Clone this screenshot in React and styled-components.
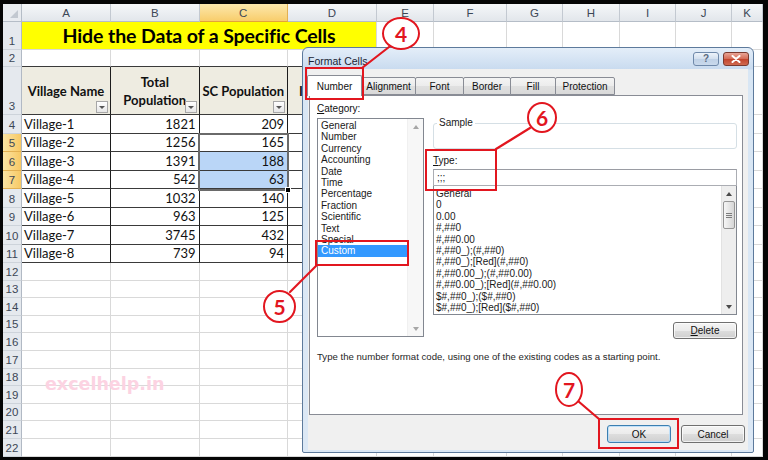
import React from 'react';
import styled, { createGlobalStyle } from 'styled-components';

const RED = '#e2161f';
const SHEET_FONT = "Lato, 'Liberation Sans', Arial, sans-serif";
const UI_FONT = "'Liberation Sans', Arial, sans-serif";

const GlobalStyle = createGlobalStyle`
  html, body { margin: 0; padding: 0; background: #000; }
  *, *::before, *::after { box-sizing: border-box; }
`;

const Frame = styled.div`
  position: relative;
  width: 768px;
  height: 460px;
  padding: 4px 5px 3px 3px;
  background: #050505;
  overflow: hidden;
`;

const Sheet = styled.div`
  display: grid;
  grid-template-columns: 19px 89px 88.5px 88.5px 89px 57px 73px 56px 57px 56px 56px 31px;
  grid-template-rows: 18px 28px 17px 48px repeat(8, 18.5px) repeat(11, 17.6px);
  height: 453px;
  background: #fff;
  font-family: ${SHEET_FONT};
  font-size: 13px;
  color: #111;
`;

const Corner = styled.div`
  position: relative;
  background: #e9ecf0;
  border-right: 1px solid #b5bdc7;
  border-bottom: 1px solid #b5bdc7;
  &::after {
    content: '';
    position: absolute;
    right: 3px;
    bottom: 3px;
    border-left: 8px solid transparent;
    border-bottom: 8px solid #c3c9d1;
  }
`;

const ColHead = styled.div`
  display: flex;
  align-items: center;
  justify-content: center;
  font-family: ${UI_FONT};
  font-size: 11.5px;
  color: #3c4756;
  background: ${(p) => (p.$active ? 'linear-gradient(#fce8ad, #f8cd6b)' : 'linear-gradient(#f5f7f9, #e2e6eb)')};
  border-right: 1px solid ${(p) => (p.$active ? '#e2b052' : '#c3c9d1')};
  border-bottom: 1px solid ${(p) => (p.$active ? '#e2a33a' : '#b5bdc7')};
`;

const RowHead = styled.div`
  display: flex;
  align-items: flex-end;
  justify-content: center;
  padding-bottom: 2px;
  font-family: ${UI_FONT};
  font-size: 11.5px;
  color: #3c4756;
  background: ${(p) => (p.$active ? 'linear-gradient(90deg, #fbe4a4, #f7c964)' : '#e5e9ee')};
  border-right: 1px solid #b1b9c4;
  border-bottom: 1px solid ${(p) => (p.$active ? '#e2b052' : '#cdd3da')};
`;

const Cell = styled.div`
  position: relative;
  display: flex;
  align-items: center;
  justify-content: ${(p) => (p.$align === 'right' ? 'flex-end' : p.$align === 'center' ? 'center' : 'flex-start')};
  padding: 0 3px 0 2px;
  white-space: nowrap;
  overflow: hidden;
  background: ${(p) => p.$bg || '#fff'};
  border-right: 1px solid ${(p) => (p.$tr ? '#1c1c1c' : '#d9d9d9')};
  border-bottom: 1px solid ${(p) => (p.$tb ? '#3a3a3a' : '#d9d9d9')};
`;

const TitleCell = styled.div`
  grid-column: span 4;
  display: flex;
  align-items: center;
  justify-content: center;
  background: #ffff00;
  font-weight: 700;
  font-size: 19.5px;
  letter-spacing: -0.1px;
  color: #000;
  border-right: 1px solid #d9d9d9;
  border-bottom: 1px solid #d9d9d9;
`;

const HeadCell = styled.div`
  position: relative;
  display: flex;
  align-items: center;
  justify-content: ${(p) => (p.$start ? 'flex-start' : 'center')};
  padding: ${(p) => (p.$start ? '0 0 0 11px' : '0 2px')};
  text-align: center;
  line-height: 18px;
  font-weight: 700;
  background: #eeece1;
  overflow: hidden;
  border-right: 1px solid #1c1c1c;
  border-bottom: 1px solid #3a3a3a;
`;

const Clip = styled.span`
  display: inline-block;
  width: 3px;
  overflow: hidden;
  white-space: nowrap;
`;

const FilterBtn = styled.span`
  position: absolute;
  right: 2px;
  bottom: 1px;
  width: 12px;
  height: 12px;
  border: 1px solid #a7a7a7;
  background: linear-gradient(#ffffff, #e6e6e6);
  display: flex;
  align-items: center;
  justify-content: center;
  &::after {
    content: '';
    border-left: 3px solid transparent;
    border-right: 3px solid transparent;
    border-top: 3px solid #555;
    margin-top: 1px;
  }
`;

const Selection = styled.div`
  position: absolute;
  left: 198px;
  top: 133px;
  width: 91px;
  height: 58px;
  border: 2px solid #6a6a6a;
  z-index: 2;
`;

const FillHandle = styled.span`
  position: absolute;
  right: -4px;
  bottom: -4px;
  width: 6px;
  height: 6px;
  background: #000;
  border: 1px solid #fff;
`;

const Watermark = styled.div`
  position: absolute;
  left: 45px;
  top: 374px;
  font-family: 'DejaVu Sans', Verdana, sans-serif;
  font-weight: 700;
  font-size: 17.5px;
  color: #fcd3e2;
  z-index: 2;
`;

/* ---------- Dialog ---------- */

const Dialog = styled.div`
  position: absolute;
  left: 302px;
  top: 47px;
  width: 452px;
  height: 406px;
  display: flex;
  flex-direction: column;
  padding: 0 5px 2px;
  border: 1px solid #5d7a9c;
  border-radius: 6px 6px 2px 2px;
  background: linear-gradient(180deg, #e4eef9 0px, #c9dbef 21px, #d8e6f4 22px, #dce8f5 100%);
  font-family: ${UI_FONT};
  font-size: 9.6px;
  color: #111;
  z-index: 3;
`;

const TitleBar = styled.div`
  flex: none;
  height: 21px;
  display: flex;
  align-items: flex-start;
  justify-content: space-between;
`;

const TitleText = styled.div`
  margin-top: 7px;
  font-size: 10.5px;
  color: #1b2535;
`;

const WinButtons = styled.div`
  display: flex;
  gap: 4px;
  margin-top: 4px;
  margin-right: -1px;
`;

const HelpBtn = styled.div`
  width: 26px;
  height: 14px;
  border: 1px solid #6f89aa;
  border-radius: 3px;
  background: linear-gradient(#edf3fa, #d2dfee 50%, #bfd1e6 51%, #c9d9ec);
  color: #5a6a7e;
  font-size: 10px;
  font-weight: 700;
  display: flex;
  align-items: center;
  justify-content: center;
  line-height: 1;
`;

const CloseBtn = styled.div`
  width: 26px;
  height: 14px;
  border: 1px solid #7a3a30;
  border-radius: 3px;
  background: linear-gradient(#e9a597, #d46a55 50%, #c2442d 51%, #d06a50);
  display: flex;
  align-items: center;
  justify-content: center;
`;

const Client = styled.div`
  flex: 1;
  display: flex;
  flex-direction: column;
  padding: 6px 5px 0 1px;
  background: #f0f0f0;
`;

const TabStrip = styled.div`
  display: flex;
  align-items: flex-end;
  height: 20px;
  margin-left: -2px;
  position: relative;
  z-index: 1;
`;

const Tab = styled.div`
  width: ${(p) => p.$w}px;
  height: ${(p) => (p.$active ? 21 : 18)}px;
  margin-bottom: ${(p) => (p.$active ? -1 : 0)}px;
  margin-left: -1px;
  position: relative;
  z-index: ${(p) => (p.$active ? 2 : 1)};
  display: flex;
  align-items: center;
  justify-content: center;
  padding-top: ${(p) => (p.$active ? 0 : 1)}px;
  border: 1px solid #898c95;
  border-bottom: ${(p) => (p.$active ? 'none' : '1px solid #898c95')};
  border-radius: 2px 2px 0 0;
  background: ${(p) => (p.$active ? '#fff' : 'linear-gradient(#f4f4f4, #ececec 50%, #e0e0e0 51%, #d9d9d9)')};
  font-size: 10px;
  color: #111;
  &:first-child { margin-left: 0; }
`;

const Panel = styled.div`
  flex: none;
  height: 320px;
  display: flex;
  flex-direction: column;
  padding: 6px 5px 0 7px;
  border: 1px solid #898c95;
  background: #fff;
`;

const TopArea = styled.div`
  display: flex;
  gap: 9px;
  height: 237px;
`;

const LeftCol = styled.div`
  width: 107px;
  display: flex;
  flex-direction: column;
`;

const RightCol = styled.div`
  width: 304px;
  display: flex;
  flex-direction: column;
`;

const FieldLabel = styled.div`
  height: ${(p) => p.$h || 14}px;
  line-height: ${(p) => p.$h || 14}px;
  margin-top: ${(p) => p.$mt || 0}px;
  font-size: 10px;
  color: #111;
`;

const ListBox = styled.div`
  display: flex;
  height: ${(p) => p.$h}px;
  margin-top: ${(p) => p.$mt}px;
  border: 1px solid #828790;
  background: #fff;
  overflow: hidden;
`;

const ListItems = styled.div`
  flex: 1;
  padding-top: ${(p) => p.$pt}px;
  overflow: hidden;
`;

const ListItem = styled.div`
  height: 11.4px;
  line-height: 11.4px;
  padding-left: ${(p) => p.$pl}px;
  font-size: 10px;
  white-space: nowrap;
  color: ${(p) => (p.$sel ? '#fff' : '#1a1a1a')};
  background: ${(p) => (p.$sel ? '#3399ff' : 'transparent')};
`;

const VScroll = styled.div`
  width: ${(p) => p.$w}px;
  flex: none;
  display: flex;
  flex-direction: column;
  background: ${(p) => (p.$disabled ? '#f7f7f7' : '#eeeeee')};
  border-left: 1px solid ${(p) => (p.$disabled ? '#f0f0f0' : '#e2e2e2')};
`;

const ScrollBtn = styled.div`
  height: 15px;
  flex: none;
  display: flex;
  align-items: center;
  justify-content: center;
`;

const Arrow = styled.span`
  width: 0;
  height: 0;
  border-left: 3.5px solid transparent;
  border-right: 3.5px solid transparent;
  border-top: ${(p) => (p.$down ? `4px solid ${p.$off ? '#a6a6a6' : '#4a4a4a'}` : 'none')};
  border-bottom: ${(p) => (p.$down ? 'none' : `4px solid ${p.$off ? '#a6a6a6' : '#4a4a4a'}`)};
`;

const Track = styled.div`
  flex: 1;
`;

const Thumb = styled.div`
  height: 28px;
  margin: 0 1px;
  border: 1px solid #969696;
  border-radius: 2px;
  background: linear-gradient(90deg, #f6f6f6, #e6e6e6 50%, #d6d6d6);
  display: flex;
  align-items: center;
  justify-content: center;
`;

const Grip = styled.span`
  width: 6px;
  height: 5px;
  border-top: 1px solid #7c7c7c;
  border-bottom: 1px solid #7c7c7c;
  position: relative;
  &::after {
    content: '';
    position: absolute;
    left: 0;
    right: 0;
    top: 1px;
    border-top: 1px solid #7c7c7c;
  }
`;

const Group = styled.fieldset`
  margin: 15px 0 0;
  padding: 0;
  height: 32px;
  border: 1px solid #d5dfe5;
  border-radius: 3px;
`;

const Legend = styled.legend`
  margin-left: 3px;
  padding: 0 2px;
  font-size: 10px;
  line-height: 12px;
  color: #1a1a1a;
`;

const TextInput = styled.div`
  height: 17px;
  margin-top: 2px;
  padding-left: 3px;
  display: flex;
  align-items: center;
  border: 1px solid #abadb3;
  border-top-color: #9a9ca3;
  font-size: 10px;
  color: #1a1a1a;
  background: #fff;
  position: relative;
  z-index: 1;
`;

const Button = styled.div`
  width: 64px;
  height: ${(p) => p.$h || 18}px;
  margin-top: ${(p) => p.$mt || 0}px;
  align-self: flex-end;
  display: flex;
  align-items: center;
  justify-content: center;
  border: 1px solid ${(p) => (p.$default ? '#3c7fb1' : '#707070')};
  border-radius: 3px;
  background: linear-gradient(#f4f4f4, #ebebeb 50%, #dddddd 51%, #d0d0d0);
  box-shadow: inset 0 0 0 1px ${(p) => (p.$default ? 'rgba(180,220,250,0.8)' : 'rgba(255,255,255,0.7)')};
  font-size: 10px;
  color: #111;
`;

const Desc = styled.div`
  margin-top: 12px;
  line-height: 12px;
  font-size: 9.6px;
  color: #1f1f1f;
  white-space: nowrap;
`;

const Footer = styled.div`
  display: flex;
  justify-content: flex-end;
  gap: 10px;
  padding-top: 10px;
  margin-right: -2px;
`;

/* ---------- Annotations ---------- */

const Connectors = styled.svg`
  position: absolute;
  left: 0;
  top: 0;
  width: 768px;
  height: 460px;
  pointer-events: none;
  z-index: 4;
`;

const Mark = styled.div`
  position: absolute;
  left: ${(p) => p.$x}px;
  top: ${(p) => p.$y}px;
  width: ${(p) => p.$w}px;
  height: ${(p) => p.$h}px;
  border: 2.5px solid ${RED};
  z-index: 5;
`;

const Callout = styled.div`
  position: absolute;
  left: ${(p) => p.$x}px;
  top: ${(p) => p.$y}px;
  width: ${(p) => p.$w}px;
  height: ${(p) => p.$h}px;
  border: 2.5px solid ${RED};
  border-radius: 50%;
  background: #fff;
  display: flex;
  align-items: center;
  justify-content: center;
  font-family: Lato, 'Liberation Sans', Arial, sans-serif;
  font-weight: 700;
  font-size: 21px;
  color: ${RED};
  z-index: 6;
`;

/* ---------- Data ---------- */

const COLS = ['A', 'B', 'C', 'D', 'E', 'F', 'G', 'H', 'I', 'J', 'K'];
const DATA = [
  ['Village-1', 1821, 209],
  ['Village-2', 1256, 165],
  ['Village-3', 1391, 188],
  ['Village-4', 542, 63],
  ['Village-5', 1032, 140],
  ['Village-6', 963, 125],
  ['Village-7', 3745, 432],
  ['Village-8', 739, 94],
];
const CATEGORIES = ['General', 'Number', 'Currency', 'Accounting', 'Date', 'Time', 'Percentage', 'Fraction', 'Scientific', 'Text', 'Special', 'Custom'];
const TYPES = [
  'General', '0', '0.00', '#,##0', '#,##0.00', '#,##0_);(#,##0)', '#,##0_);[Red](#,##0)',
  '#,##0.00_);(#,##0.00)', '#,##0.00_);[Red](#,##0.00)', '$#,##0_);($#,##0)', '$#,##0_);[Red]($#,##0)',
];
const TABS = [
  ['Number', 55, true], ['Alignment', 55], ['Font', 49], ['Border', 48], ['Fill', 46], ['Protection', 60],
];

function EmptyCells({ from = 0, row }) {
  return COLS.slice(from).map((c) => <Cell key={`${row}-${c}`} />);
}

export default function App() {
  return (
    <Frame>
      <GlobalStyle />
      <Sheet>
        <Corner />
        {COLS.map((c) => (
          <ColHead key={c} $active={c === 'C'}>{c}</ColHead>
        ))}

        <RowHead>1</RowHead>
        <TitleCell>Hide the Data of a Specific Cells</TitleCell>
        <EmptyCells from={4} row={1} />

        <RowHead>2</RowHead>
        {COLS.map((c, i) => (
          <Cell key={`2-${c}`} $tb={i < 4} $tr={i === 3} />
        ))}

        <RowHead>3</RowHead>
        <HeadCell>Village Name<FilterBtn /></HeadCell>
        <HeadCell>Total Population<FilterBtn /></HeadCell>
        <HeadCell>SC Population<FilterBtn /></HeadCell>
        <HeadCell $start><Clip>I</Clip><FilterBtn /></HeadCell>
        <EmptyCells from={4} row={3} />

        {DATA.map(([name, total, sc], i) => {
          const row = i + 4;
          const sel = row === 6 || row === 7;
          return (
            <React.Fragment key={row}>
              <RowHead $active={row >= 5 && row <= 7}>{row}</RowHead>
              <Cell $tr $tb>{name}</Cell>
              <Cell $tr $tb $align="right">{total}</Cell>
              <Cell $tr $tb $align="right" $bg={sel ? '#bad6f7' : undefined}>{sc}</Cell>
              <Cell $tr $tb />
              <EmptyCells from={4} row={row} />
            </React.Fragment>
          );
        })}

        {Array.from({ length: 11 }, (_, i) => i + 12).map((row) => (
          <React.Fragment key={row}>
            <RowHead>{row}</RowHead>
            <EmptyCells row={row} />
          </React.Fragment>
        ))}
      </Sheet>

      <Selection>
        <FillHandle />
      </Selection>
      <Watermark>excelhelp.in</Watermark>

      <Dialog>
        <TitleBar>
          <TitleText>Format Cells</TitleText>
          <WinButtons>
            <HelpBtn>?</HelpBtn>
            <CloseBtn>
              <svg width="10" height="8" viewBox="0 0 10 8">
                <path d="M1.5 1 L8.5 7 M8.5 1 L1.5 7" stroke="#fff" strokeWidth="2" strokeLinecap="round" />
              </svg>
            </CloseBtn>
          </WinButtons>
        </TitleBar>
        <Client>
          <TabStrip>
            {TABS.map(([label, w, active]) => (
              <Tab key={label} $w={w} $active={active}>{label}</Tab>
            ))}
          </TabStrip>
          <Panel>
            <TopArea>
              <LeftCol>
                <FieldLabel><u>C</u>ategory:</FieldLabel>
                <ListBox $h={219} $mt={2}>
                  <ListItems $pt={1}>
                    {CATEGORIES.map((c) => (
                      <ListItem key={c} $pl={3} $sel={c === 'Custom'}>{c}</ListItem>
                    ))}
                  </ListItems>
                  <VScroll $w={16} $disabled>
                    <ScrollBtn><Arrow $off /></ScrollBtn>
                    <Track />
                    <ScrollBtn><Arrow $down $off /></ScrollBtn>
                  </VScroll>
                </ListBox>
              </LeftCol>
              <RightCol>
                <Group>
                  <Legend>Sample</Legend>
                </Group>
                <FieldLabel $h={12} $mt={6}><u>T</u>ype:</FieldLabel>
                <TextInput>;;;</TextInput>
                <ListBox $h={130} $mt={-1}>
                  <ListItems $pt={2}>
                    {TYPES.map((t) => (
                      <ListItem key={t} $pl={2}>{t}</ListItem>
                    ))}
                  </ListItems>
                  <VScroll $w={15}>
                    <ScrollBtn><Arrow /></ScrollBtn>
                    <Thumb><Grip /></Thumb>
                    <Track />
                    <ScrollBtn><Arrow $down /></ScrollBtn>
                  </VScroll>
                </ListBox>
                <Button $h={17} $mt={7}><u>D</u>elete</Button>
              </RightCol>
            </TopArea>
            <Desc>Type the number format code, using one of the existing codes as a starting point.</Desc>
          </Panel>
          <Footer>
            <Button $default>OK</Button>
            <Button>Cancel</Button>
          </Footer>
        </Client>
      </Dialog>

      <Connectors viewBox="0 0 768 460">
        <g stroke={RED} strokeWidth="2.2" strokeLinecap="round" fill="none">
          <line x1="389" y1="47" x2="362" y2="68" />
          <line x1="530" y1="128" x2="496" y2="149" />
          <line x1="290" y1="292" x2="316" y2="266" />
          <line x1="578" y1="401" x2="599" y2="419" />
        </g>
      </Connectors>

      <Mark $x={305} $y={67} $w={59} $h={33} />
      <Mark $x={425} $y={149} $w={72} $h={42} />
      <Mark $x={315} $y={240} $w={94} $h={26} />
      <Mark $x={598} $y={418} $w={81} $h={31} />

      <Callout $x={382} $y={17} $w={38} $h={33}>4</Callout>
      <Callout $x={527} $y={102} $w={30} $h={31}>6</Callout>
      <Callout $x={263} $y={290} $w={33} $h={33}>5</Callout>
      <Callout $x={555} $y={372} $w={28} $h={35}>7</Callout>
    </Frame>
  );
}
